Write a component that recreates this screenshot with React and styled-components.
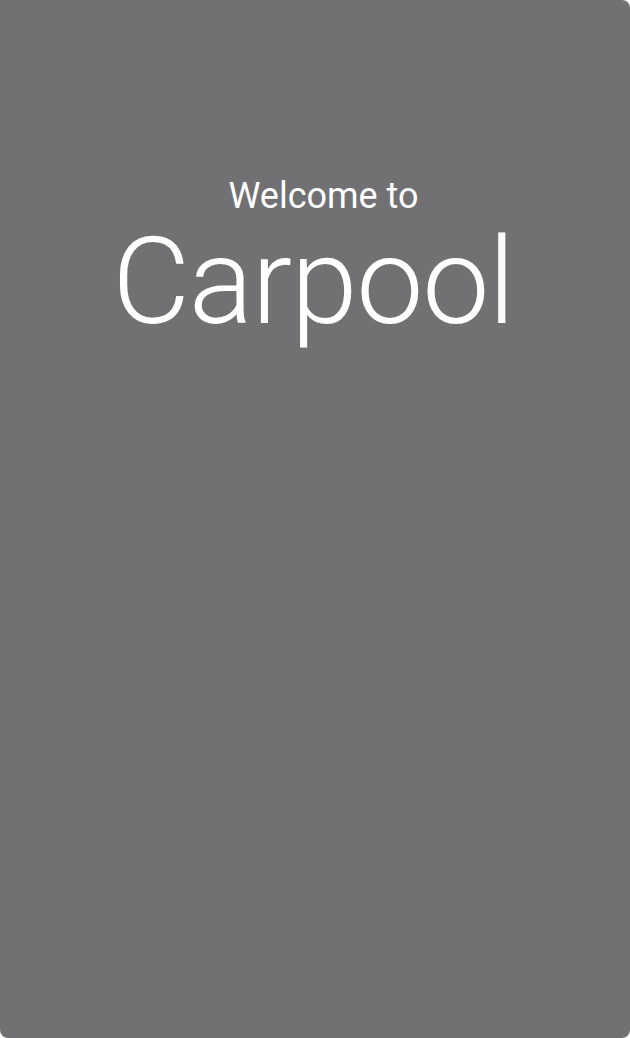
import React from "react";
import styled, { createGlobalStyle } from "styled-components";

const Global = createGlobalStyle`
  html, body { margin: 0; padding: 0; background: #ffffff; }
  #root { width: 630px; height: 1038px; }
`;

const Screen = styled.div`
  width: 630px;
  height: 1038px;
  box-sizing: border-box;
  background: #717073;
  border-radius: 0 8px 8px 8px;
  display: flex;
  flex-direction: column;
  align-items: center;
  padding-top: 173px;
  color: #ffffff;
`;

const Subtitle = styled.div`
  font-family: Roboto, "Liberation Sans", sans-serif;
  font-weight: 400;
  font-size: 36px;
  line-height: 46px;
  margin-left: 17px;
`;

const Title = styled.h1`
  margin: 0;
  font-family: Roboto, "Liberation Sans", sans-serif;
  font-weight: 300;
  font-size: 120px;
  line-height: 126px;
  letter-spacing: -1.3px;
  margin-left: -4px;
`;

export default function App() {
  return (
    <>
      <Global />
      <Screen>
        <Subtitle>Welcome to</Subtitle>
        <Title>Carpool</Title>
      </Screen>
    </>
  );
}
